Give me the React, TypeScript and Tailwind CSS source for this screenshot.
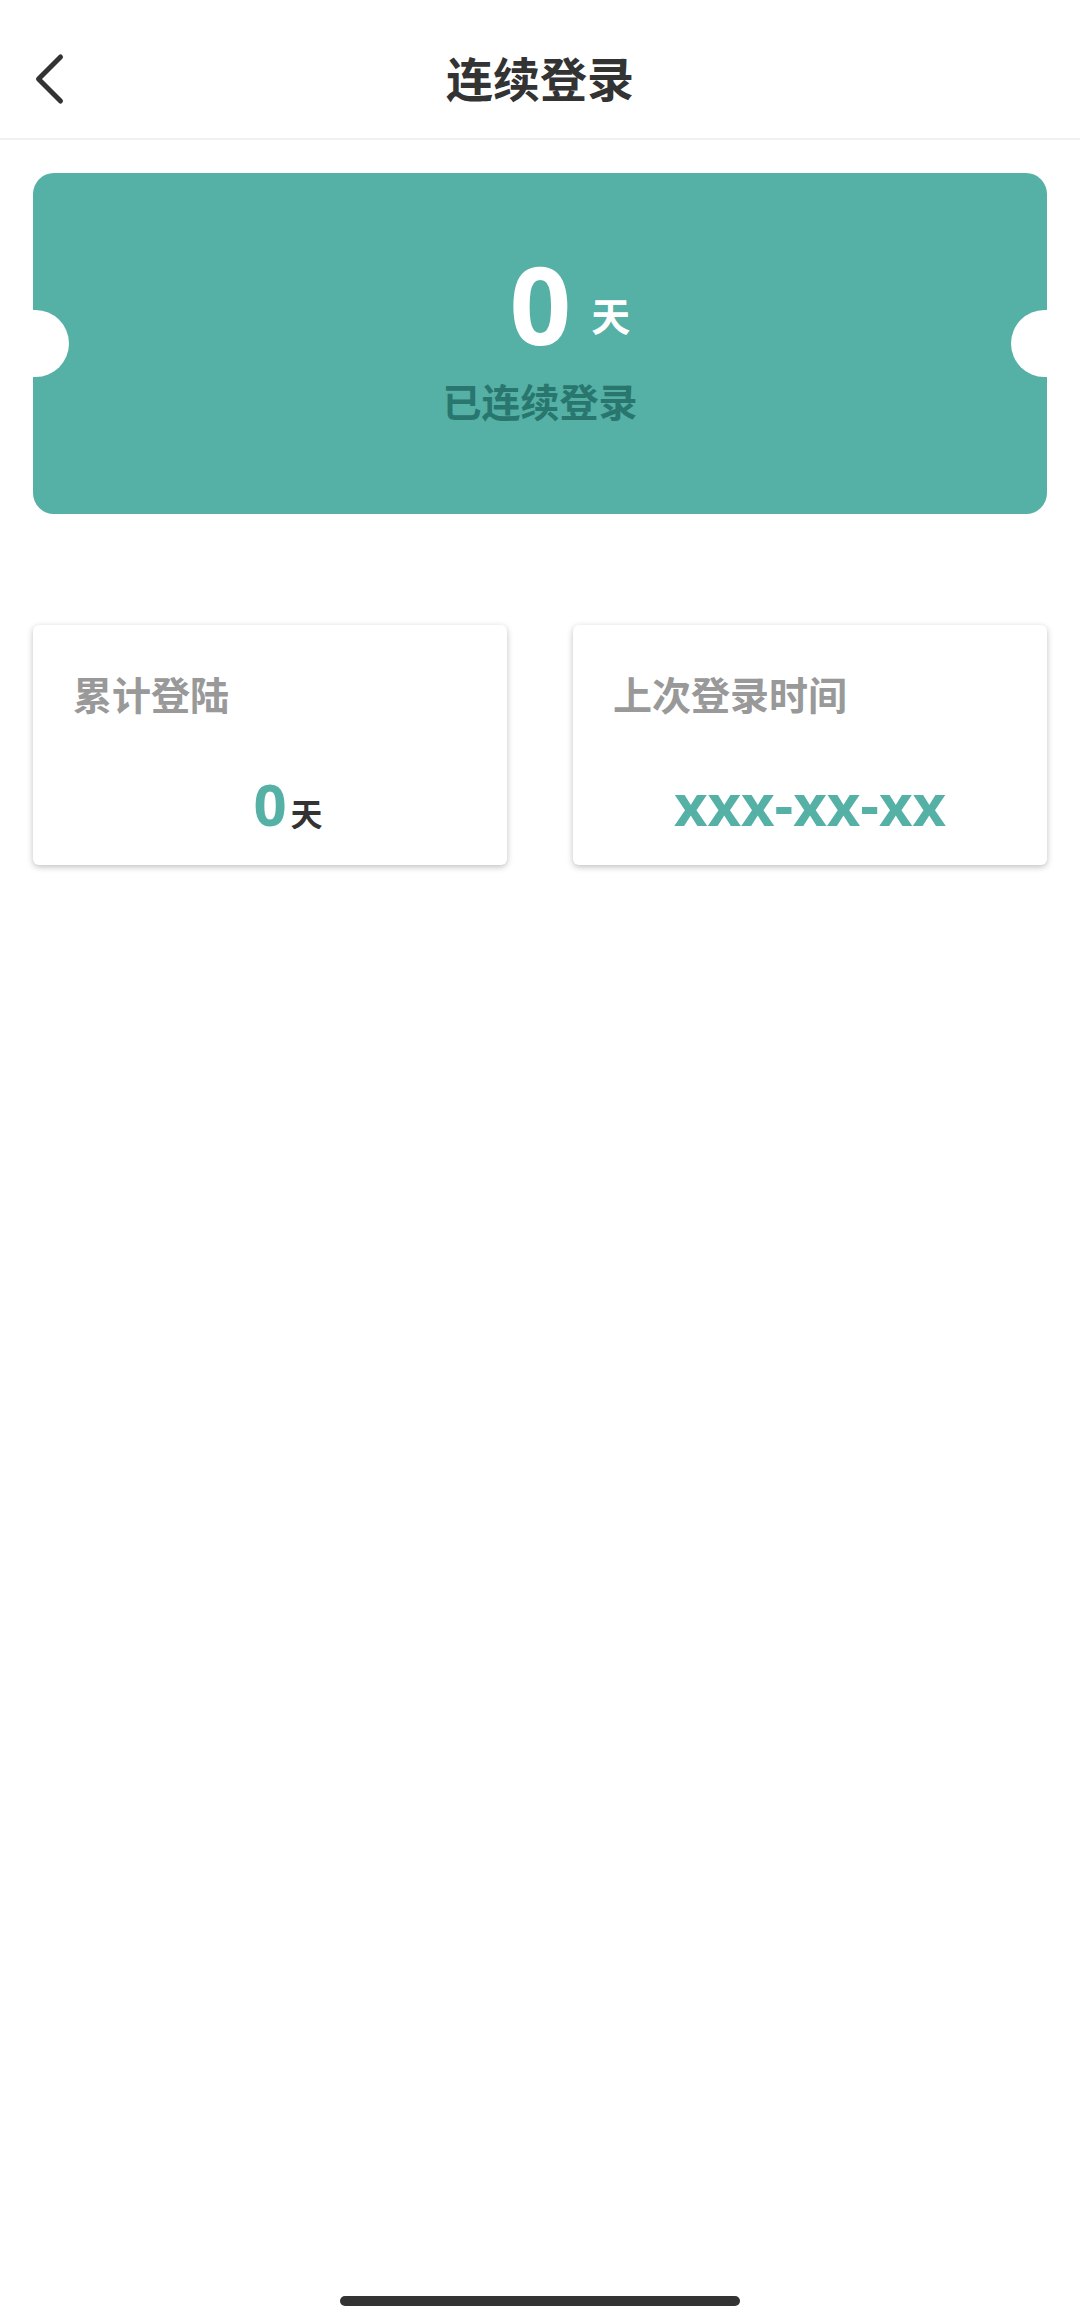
import type { ReactNode } from "react";

function StatCard({ label, children }: { label: string; children: ReactNode }) {
  return (
    <section className="flex flex-col gap-12 rounded-md bg-white px-10 pt-[46px] pb-6 shadow-[0_2px_6px_rgba(0,0,0,0.25)]">
      <h2 className="text-[39px] leading-12 font-bold text-[#999999]">{label}</h2>
      <p className="flex items-baseline justify-center gap-1 text-[58px] leading-[74px] font-bold text-[#55b0a6]">{children}</p>
    </section>
  );
}

export default function App() {
  return (
    <div className="flex min-h-screen flex-col bg-white font-['Open_Sans','Noto_Sans_CJK_SC',sans-serif] text-[#333333]">
      <header className="grid h-[140px] grid-cols-[96px_1fr_96px] items-center border-b-2 border-[#f0f0f0] pt-5">
        <button type="button" aria-label="返回" className="flex h-20 items-center pl-8">
          <svg viewBox="0 0 36 56" className="h-14 w-9" fill="none" stroke="currentColor" strokeWidth="5" strokeLinecap="round" strokeLinejoin="round">
            <path d="M28.500 6L6.500 28L28.500 50" />
          </svg>
        </button>
        <h1 className="text-center text-[47px] leading-16 font-bold">连续登录</h1>
      </header>

      <main className="flex flex-1 flex-col gap-[111px] px-[33px] pt-[33px]">
        <section className="flex items-center justify-between rounded-[21px] bg-[#55b0a6]">
          <span className="h-[67px] w-9 rounded-r-full bg-white" />
          <div className="flex flex-col items-center pt-[61px] pb-[84px] font-bold">
            <p className="flex items-center gap-5 pl-15 text-white">
              <span className="text-[108px] leading-[140px]">0</span>
              <span className="pt-6 text-[39px] leading-12">天</span>
            </p>
            <p className="text-[39px] leading-14 text-[#28766d]">已连续登录</p>
          </div>
          <span className="h-[67px] w-9 rounded-l-full bg-white" />
        </section>

        <div className="grid grid-cols-2 gap-[66px]">
          <StatCard label="累计登陆">
            <span className="pl-9">0</span>
            <span className="text-[32px] leading-none text-[#333333]">天</span>
          </StatCard>
          <StatCard label="上次登录时间">xxx-xx-xx</StatCard>
        </div>
      </main>

      <footer className="flex justify-center pb-4">
        <div className="h-2.5 w-[37%] rounded-full bg-[#333333]" />
      </footer>
    </div>
  );
}
